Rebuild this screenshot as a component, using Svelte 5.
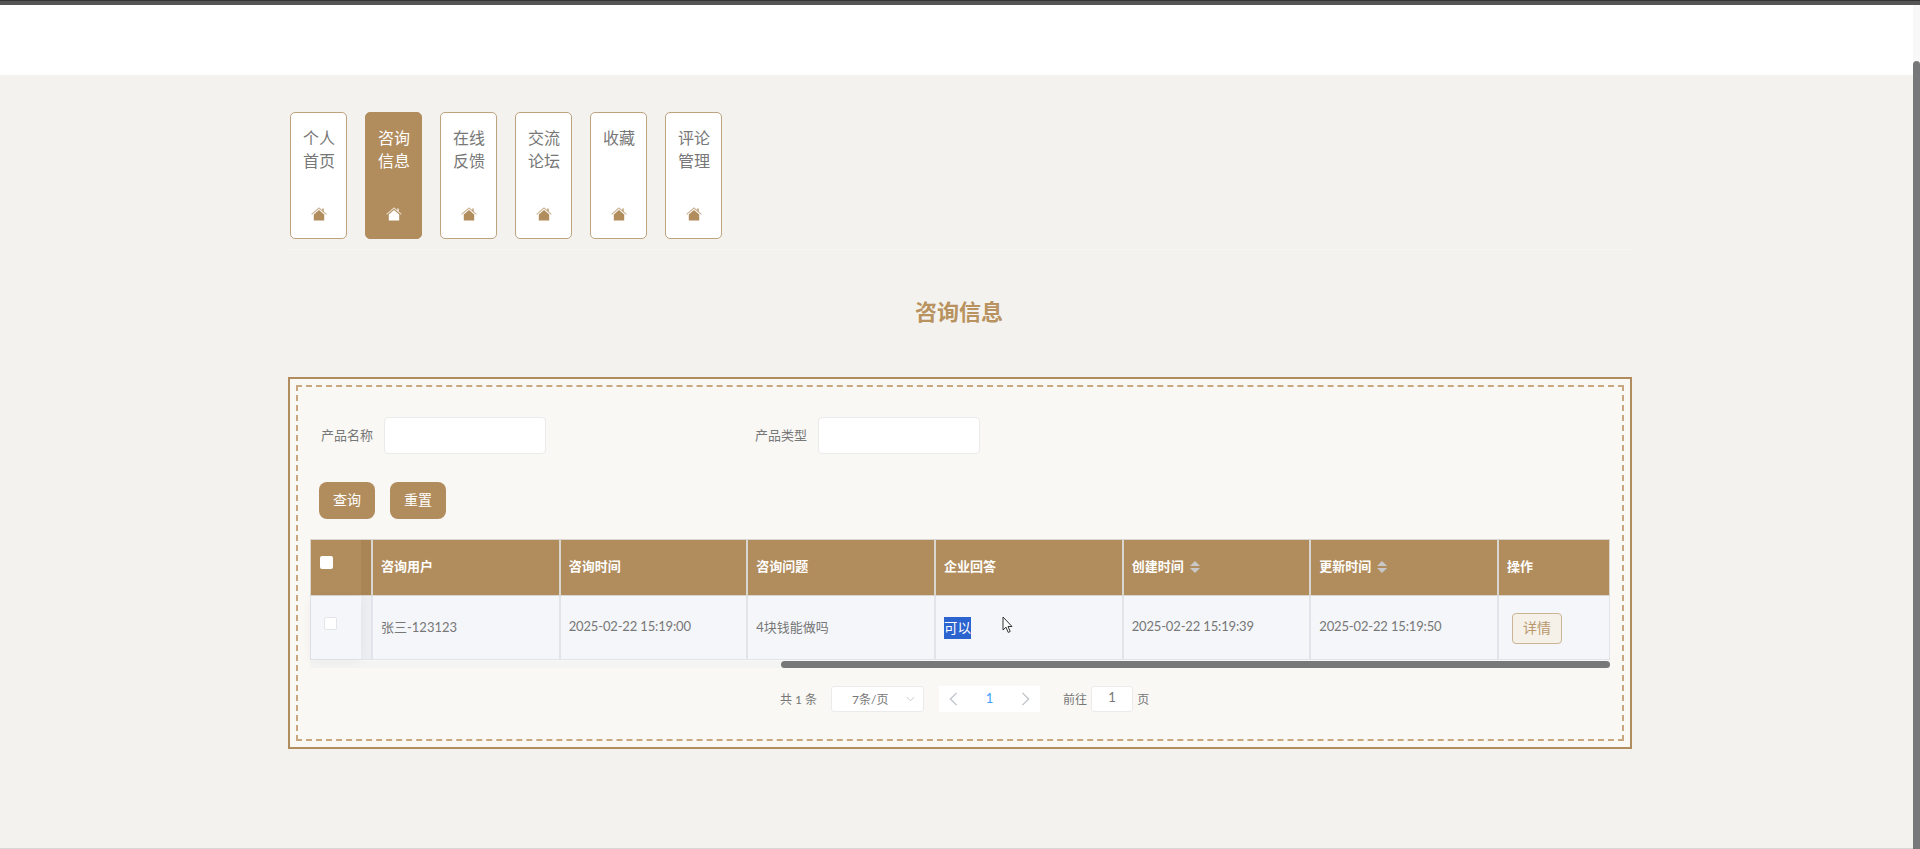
<script>
  const tabs = [
    { lines: ['个人', '首页'] },
    { lines: ['咨询', '信息'], active: true },
    { lines: ['在线', '反馈'] },
    { lines: ['交流', '论坛'] },
    { lines: ['收藏'] },
    { lines: ['评论', '管理'] }
  ]

  const columns = [
    { title: '咨询用户' },
    { title: '咨询时间' },
    { title: '咨询问题' },
    { title: '企业回答' },
    { title: '创建时间', sort: true },
    { title: '更新时间', sort: true }
  ]

  const row = [
    { value: '张三-123123' },
    { value: '2025-02-22 15:19:00', date: true },
    { value: '4块钱能做吗' },
    { value: '可以', selected: true },
    { value: '2025-02-22 15:19:39', date: true },
    { value: '2025-02-22 15:19:50', date: true }
  ]
</script>

<div class="topbar"></div>
<header class="header"></header>

<main class="page">
  <nav class="tabs">
    {#each tabs as tab}
      <div class="tab" class:active={tab.active}>
        <div class="tab-text">
          {#each tab.lines as line}
            <div>{line}</div>
          {/each}
        </div>
        <svg class="home" viewBox="0 0 16 14" width="16" height="14">
          <path d="M2.8 7.4 L8 2.9 L13.2 7.4 V13.6 H2.8 Z" fill="currentColor" />
          <path d="M0.6 7.4 L8 1 L15.4 7.4" fill="none" stroke="currentColor" stroke-opacity="0.65" stroke-width="1.2" />
          <path d="M11.2 1.4 H12.8 V5 L11.2 3.6 Z" fill="currentColor" fill-opacity="0.8" />
        </svg>
      </div>
    {/each}
  </nav>
  <div class="divider"></div>

  <h1 class="title">咨询信息</h1>

  <section class="box">
    <div class="dashed">
      <div class="search">
        <div class="field">
          <span class="label">产品名称</span>
          <div class="input"></div>
        </div>
        <div class="field">
          <span class="label">产品类型</span>
          <div class="input"></div>
        </div>
      </div>

      <div class="actions">
        <button class="btn">查询</button>
        <button class="btn">重置</button>
      </div>

      <div class="table">
        <div class="tr head">
          <div class="check-cell"><span class="check head-check"></span></div>
          <div class="gap-cell"></div>
          {#each columns as col}
            <div class="cell">
              {col.title}
              {#if col.sort}
                <span class="sort"><i class="up"></i><i class="down"></i></span>
              {/if}
            </div>
          {/each}
          <div class="cell">操作</div>
        </div>
        <div class="tr body">
          <div class="check-cell"><span class="check"></span></div>
          <div class="gap-cell"></div>
          {#each row as item}
            <div class="cell" class:date={item.date}>
              {#if item.selected}
                <span class="selected">{item.value}</span>
              {:else}
                {item.value}
              {/if}
            </div>
          {/each}
          <div class="cell"><button class="detail">详情</button></div>
        </div>
        <div class="table-scroll"><div class="table-thumb"></div></div>
      </div>

      <div class="pager">
        <span class="pager-text">共 1 条</span>
        <div class="size">
          <span class="pager-text">7条/页</span>
          <svg viewBox="0 0 10 6" width="9" height="6"><path d="M1 1 L5 5 L9 1" fill="none" stroke="#c0c4cc" stroke-width="1" /></svg>
        </div>
        <div class="pages">
          <svg viewBox="0 0 10 16" width="9" height="14"><path d="M8.5 1 L1.5 8 L8.5 15" fill="none" stroke="#c0c4cc" stroke-width="1.6" /></svg>
          <span class="current">1</span>
          <svg viewBox="0 0 10 16" width="9" height="14"><path d="M1.5 1 L8.5 8 L1.5 15" fill="none" stroke="#c0c4cc" stroke-width="1.6" /></svg>
        </div>
        <div class="jump">
          <span class="pager-text">前往</span>
          <div class="jump-input">1</div>
          <span class="pager-text">页</span>
        </div>
      </div>
    </div>
  </section>
</main>

<svg class="cursor" viewBox="0 0 12 18" width="12" height="18">
  <path d="M1 1 V14 L4 11.2 L6.2 16.4 L8.2 15.5 L6 10.5 H10 Z" fill="#fff" stroke="#333" stroke-width="1" />
</svg>

<div class="bottom-line"></div>
<div class="page-scroll"><div class="page-thumb"></div></div>

<style>
  :global(body) {
    margin: 0;
    background: #f3f2ee;
    font-family: Lato, "Noto Sans CJK SC", sans-serif;
    overflow: hidden;
  }

  .topbar {
    height: 4px;
    background: #555;
    border-top: 1px solid #333;
  }
  .header {
    height: 70px;
    background: #fff;
  }

  .page {
    width: 1350px;
    margin-left: 284px;
    padding-top: 37px;
  }

  .tabs {
    display: flex;
    gap: 18px;
    padding-left: 6.4px;
  }
  .tab {
    box-sizing: border-box;
    width: 57px;
    height: 127px;
    background: #fff;
    border: 1px solid #bda37e;
    border-radius: 5px;
    color: #777;
    font-size: 16px;
    line-height: 23px;
    text-align: center;
    padding-top: 13px;
    display: flex;
    flex-direction: column;
    align-items: center;
    justify-content: space-between;
  }
  .tab.active {
    background: #b18c5c;
    border-color: #b18c5c;
    color: #fff;
  }
  .home {
    color: #b18c5c;
    margin-bottom: 17px;
  }
  .active .home {
    color: #fff;
  }

  .divider {
    height: 1px;
    background: #f6f5f2;
    margin-top: 10px;
  }

  .title {
    margin: 45px 0 0;
    height: 82px;
    font-size: 22px;
    line-height: 34px;
    font-weight: 700;
    color: #b8925f;
    text-align: center;
  }

  .box {
    box-sizing: border-box;
    width: 1344px;
    margin-left: 4px;
    height: 372px;
    border: 2px solid #b18c5c;
    padding: 6px;
    background: #f9f8f5;
  }
  .dashed {
    box-sizing: border-box;
    height: 100%;
    border: 2px dashed #c9a880;
    padding: 30px 12px 0 12px;
  }

  .search {
    display: flex;
    height: 37px;
  }
  .field {
    display: flex;
    align-items: center;
    width: 434px;
    padding-left: 11px;
    box-sizing: border-box;
  }
  .label {
    font-size: 13px;
    color: #777;
    width: 63px;
    margin-bottom: 3px;
  }
  .input {
    box-sizing: border-box;
    width: 162px;
    height: 37px;
    background: #fff;
    border: 1px solid #ebebeb;
    border-radius: 4px;
  }

  .actions {
    display: flex;
    gap: 15px;
    margin-top: 28px;
    padding-left: 9px;
  }
  .btn {
    width: 56px;
    height: 37px;
    padding: 0 0 3px;
    border: none;
    border-radius: 8px;
    background: #b18c5c;
    color: #fff;
    font: inherit;
    font-size: 14px;
  }

  .table {
    position: relative;
    margin-top: 20px;
    width: 1300px;
  }
  .tr {
    display: grid;
    grid-template-columns: 50px 10px repeat(6, 187.67px) 113px;
    box-sizing: border-box;
  }
  .head {
    height: 57px;
    background: #b18c5c;
    color: #fff;
    font-size: 13px;
    font-weight: 700;
    border: 1px solid #d9d6cf;
  }
  .body {
    height: 64px;
    background: #f4f6fa;
    color: #777;
    font-size: 13px;
    border: 1px solid #e1e4ea;
    border-top: none;
  }
  .cell {
    display: flex;
    align-items: center;
    padding-left: 8px;
    gap: 6px;
  }
  .head .cell {
    border-left: 2px solid #d9d6cf;
    padding-bottom: 4px;
  }
  .body .cell {
    border-left: 2px solid #e1e4ea;
    padding-bottom: 3px;
  }
  .date {
    letter-spacing: -0.15px;
  }
  .check-cell {
    position: relative;
    z-index: 1;
  }
  .body .check-cell {
    box-shadow: 0 2px 10px rgba(0, 0, 0, 0.05);
  }
  .head .gap-cell {
    background: #a98555;
  }
  .body .gap-cell {
    background: #eceef2;
  }
  .check {
    position: absolute;
    left: 13px;
    top: 21px;
    box-sizing: border-box;
    width: 13px;
    height: 13px;
    background: #fff;
    border: 1px solid #e3e5ea;
    border-radius: 2px;
  }
  .head-check {
    left: 9px;
    top: 16px;
    border: none;
  }
  .selected {
    margin-top: 3px;
    background: #2b63cf;
    color: #fff;
    line-height: 22px;
    font-size: 13.5px;
  }
  .sort {
    display: inline-flex;
    flex-direction: column;
    gap: 2px;
    margin-top: 3px;
  }
  .sort i {
    display: block;
    width: 0;
    height: 0;
    border-left: 5px solid transparent;
    border-right: 5px solid transparent;
  }
  .up {
    border-bottom: 5px solid #c8c8c8;
  }
  .down {
    border-top: 5px solid #c8c8c8;
  }
  .detail {
    width: 50px;
    height: 31px;
    margin: 4px 0 0 5px;
    padding: 0 0 3px;
    background: #f5f0e8;
    border: 1px solid #c9b594;
    border-radius: 4px;
    color: #b8996f;
    font: inherit;
    font-size: 14px;
  }
  .table-scroll {
    height: 7px;
    margin-top: 1px;
    background: #f4f4f2;
  }
  .table-thumb {
    height: 7px;
    margin-left: 471px;
    background: #77787a;
    border-radius: 4px;
  }

  .pager {
    display: flex;
    align-items: center;
    margin-top: 18px;
    padding-left: 470px;
    height: 26px;
    font-size: 12px;
    color: #777;
  }
  .pager-text {
    margin-bottom: 2px;
  }
  .size {
    box-sizing: border-box;
    width: 93px;
    height: 26px;
    margin-left: 14px;
    background: #fff;
    border: 1px solid #ebebeb;
    border-radius: 3px;
    display: flex;
    align-items: center;
    justify-content: space-between;
    padding: 0 8px 0 20px;
  }
  .pages {
    box-sizing: border-box;
    width: 101px;
    height: 26px;
    margin-left: 15px;
    background: #fff;
    display: flex;
    align-items: center;
    justify-content: space-between;
    padding: 0 10px;
  }
  .current {
    color: #409eff;
    font-size: 13px;
    margin-bottom: 2px;
  }
  .jump {
    display: flex;
    align-items: center;
    margin-left: 23px;
    gap: 4px;
  }
  .jump-input {
    box-sizing: border-box;
    width: 42px;
    height: 26px;
    background: #fff;
    border: 1px solid #ebebeb;
    border-radius: 3px;
    text-align: center;
    line-height: 20px;
    font-size: 13px;
  }

  .cursor {
    position: absolute;
    left: 1002px;
    top: 616px;
  }

  .bottom-line {
    position: fixed;
    left: 0;
    right: 0;
    bottom: 0;
    height: 1px;
    background: #d8d8d8;
  }
  .page-scroll {
    position: fixed;
    top: 5px;
    right: 0;
    bottom: 0;
    width: 7px;
    background: #f8f8f8;
  }
  .page-thumb {
    margin-top: 56px;
    height: 788px;
    background: #77787a;
    border-radius: 4px 4px 0 0;
  }
</style>
